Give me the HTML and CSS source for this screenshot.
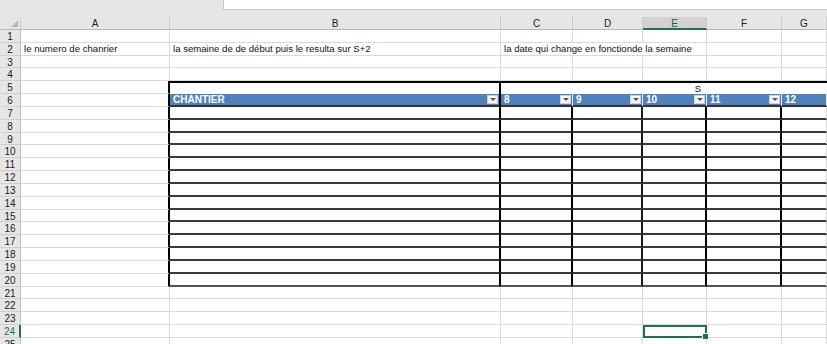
FILE: index.html
```html
<!DOCTYPE html>
<html lang="fr">
<head>
    <meta charset="UTF-8">
    <title>Planning chantiers</title>
    <link rel="stylesheet" href="styles.css">
</head>
<body>
    <!-- Formula bar strip -->
    <div class="topbar">
        <div class="formula"></div>
    </div>

    <div class="sheet">
        <!-- Column headers -->
        <div class="ch corner"></div>
        <div class="ch">A</div>
        <div class="ch">B</div>
        <div class="ch">C</div>
        <div class="ch">D</div>
        <div class="ch active">E</div>
        <div class="ch">F</div>
        <div class="ch">G</div>

        <div class="rh">1</div><div></div><div></div><div></div><div></div><div></div><div></div><div></div>

        <div class="rh">2</div>
        <div>le numero de chanrier</div>
        <div>la semaine de de début puis le resulta sur S+2</div>
        <div class="span3">la date qui change en fonctionde la semaine</div>
        <div></div><div></div>

        <div class="rh">3</div><div></div><div></div><div></div><div></div><div></div><div></div><div></div>
        <div class="rh">4</div><div></div><div></div><div></div><div></div><div></div><div></div><div></div>

        <!-- Table -->
        <div class="rh">5</div>
        <div class="edge"></div>
        <div class="title-b"></div>
        <div class="title-s">S</div>

        <div class="rh">6</div>
        <div class="edge"></div>
        <div class="hd hd-b">CHANTIER<span class="dd"></span></div>
        <div class="hd">8<span class="dd"></span></div>
        <div class="hd">9<span class="dd"></span></div>
        <div class="hd">10<span class="dd"></span></div>
        <div class="hd">11<span class="dd"></span></div>
        <div class="hd">12</div>

        <div class="rh">7</div><div class="edge"></div><div class="tb tb-b"></div><div class="tb tb-k"></div><div class="tb tb-d"></div><div class="tb tb-k"></div><div class="tb tb-k"></div><div class="tb"></div>
        <div class="rh">8</div><div class="edge"></div><div class="tb tb-b"></div><div class="tb tb-k"></div><div class="tb tb-d"></div><div class="tb tb-k"></div><div class="tb tb-k"></div><div class="tb"></div>
        <div class="rh">9</div><div class="edge"></div><div class="tb tb-b"></div><div class="tb tb-k"></div><div class="tb tb-d"></div><div class="tb tb-k"></div><div class="tb tb-k"></div><div class="tb"></div>
        <div class="rh">10</div><div class="edge"></div><div class="tb tb-b"></div><div class="tb tb-k"></div><div class="tb tb-d"></div><div class="tb tb-k"></div><div class="tb tb-k"></div><div class="tb"></div>
        <div class="rh">11</div><div class="edge"></div><div class="tb tb-b"></div><div class="tb tb-k"></div><div class="tb tb-d"></div><div class="tb tb-k"></div><div class="tb tb-k"></div><div class="tb"></div>
        <div class="rh">12</div><div class="edge"></div><div class="tb tb-b"></div><div class="tb tb-k"></div><div class="tb tb-d"></div><div class="tb tb-k"></div><div class="tb tb-k"></div><div class="tb"></div>
        <div class="rh">13</div><div class="edge"></div><div class="tb tb-b"></div><div class="tb tb-k"></div><div class="tb tb-d"></div><div class="tb tb-k"></div><div class="tb tb-k"></div><div class="tb"></div>
        <div class="rh">14</div><div class="edge"></div><div class="tb tb-b"></div><div class="tb tb-k"></div><div class="tb tb-d"></div><div class="tb tb-k"></div><div class="tb tb-k"></div><div class="tb"></div>
        <div class="rh">15</div><div class="edge"></div><div class="tb tb-b"></div><div class="tb tb-k"></div><div class="tb tb-d"></div><div class="tb tb-k"></div><div class="tb tb-k"></div><div class="tb"></div>
        <div class="rh">16</div><div class="edge"></div><div class="tb tb-b"></div><div class="tb tb-k"></div><div class="tb tb-d"></div><div class="tb tb-k"></div><div class="tb tb-k"></div><div class="tb"></div>
        <div class="rh">17</div><div class="edge"></div><div class="tb tb-b"></div><div class="tb tb-k"></div><div class="tb tb-d"></div><div class="tb tb-k"></div><div class="tb tb-k"></div><div class="tb"></div>
        <div class="rh">18</div><div class="edge"></div><div class="tb tb-b"></div><div class="tb tb-k"></div><div class="tb tb-d"></div><div class="tb tb-k"></div><div class="tb tb-k"></div><div class="tb"></div>
        <div class="rh">19</div><div class="edge"></div><div class="tb tb-b"></div><div class="tb tb-k"></div><div class="tb tb-d"></div><div class="tb tb-k"></div><div class="tb tb-k"></div><div class="tb"></div>
        <div class="rh">20</div><div class="edge"></div><div class="tb tb-b last"></div><div class="tb tb-k last"></div><div class="tb tb-d last"></div><div class="tb tb-k last"></div><div class="tb tb-k last"></div><div class="tb last"></div>

        <div class="rh">21</div><div></div><div></div><div></div><div></div><div></div><div></div><div></div>
        <div class="rh">22</div><div></div><div></div><div></div><div></div><div></div><div></div><div></div>
        <div class="rh">23</div><div></div><div></div><div></div><div></div><div></div><div></div><div></div>
        <div class="rh active">24</div><div></div><div></div><div></div><div></div><div class="selected"></div><div></div><div></div>
        <div class="rh">25</div><div></div><div></div><div></div><div></div><div></div><div></div><div></div>
    </div>
</body>
</html>
```

FILE: styles.css
```css
body {
    margin: 0;
    padding: 0;
    background: #fff;
    font-family: "Liberation Sans", Arial, sans-serif;
    font-size: 9.6px;
    color: #111;
    overflow: hidden;
}

.topbar {
    height: 17px;
    background: #e6e6e6;
    display: flex;
    justify-content: flex-end;
}

.formula {
    width: 603px;
    height: 9px;
    background: #fff;
    border-left: 1px solid #c6c6c6;
    border-bottom: 1px solid #c6c6c6;
}

.sheet {
    display: grid;
    grid-template-columns: 21px 149px 331px 72px 70px 64px 75px 45px;
    grid-template-rows: 13px repeat(25, 12.83px);
}

.sheet > div {
    box-sizing: border-box;
    border-right: 1px solid #dadada;
    border-bottom: 1px solid #dadada;
    line-height: 12px;
    padding-left: 3px;
    white-space: nowrap;
    overflow: visible;
}

/* headers */
.sheet > .ch {
    background: #e6e6e6;
    color: #222;
    font-size: 10px;
    text-align: center;
    padding-left: 0;
    border-right: 1px solid #cbcbcb;
    border-bottom: 1px solid #b8b8b8;
    line-height: 13px;
}

.sheet > .ch.active {
    background: #d2d2d2;
    color: #1e5b37;
    border-bottom: 2px solid #217346;
}

.sheet > .corner {
    position: relative;
}

.corner::after {
    content: "";
    position: absolute;
    right: 2px;
    bottom: 2px;
    border-left: 7px solid transparent;
    border-bottom: 7px solid #b9b9b9;
}

.sheet > .rh {
    background: #e6e6e6;
    color: #222;
    font-size: 10px;
    text-align: center;
    padding-left: 0;
    border-right: 1px solid #bdbdbd;
    border-bottom: 1px solid #d0d0d0;
    line-height: 13px;
}

.sheet > .rh.active {
    color: #217346;
    border-right: 2px solid #217346;
}

.sheet > .span3 {
    grid-column: span 3;
}

/* table block */
.sheet > .edge {
    border-right: 2px solid #000;
}

.sheet > .title-b {
    border-top: 2px solid #000;
    border-right: 2px solid #000;
    border-bottom: none;
}

.sheet > .title-s {
    grid-column: span 5;
    border-top: 2px solid #000;
    border-right: none;
    border-bottom: none;
    text-align: center;
    padding-left: 68px;
    line-height: 11px;
}

.sheet > .hd {
    background: #4f81bd;
    color: #fff;
    font-size: 10px;
    font-weight: bold;
    display: flex;
    justify-content: space-between;
    align-items: center;
    border-right: 1px solid #e4e9f0;
    border-bottom: 2px solid #333;
    line-height: 11px;
    padding-right: 1px;
}

.sheet > .hd-b {
    border-right: 2px solid #000;
}

.dd {
    width: 11px;
    height: 9px;
    background: #f7f7f7;
    border: 1px solid #cfcfcf;
    box-sizing: border-box;
    display: flex;
    justify-content: center;
    align-items: center;
}

.dd::after {
    content: "";
    border-left: 3px solid transparent;
    border-right: 3px solid transparent;
    border-top: 3px solid #555;
}

.sheet > .tb {
    border-bottom: 2px solid #3a3a3a;
}

.sheet > .tb-b,
.sheet > .tb-k {
    border-right: 2px solid #000;
}

.sheet > .tb-d {
    border-right: 2px solid #1a1a1a;
}

.sheet > .tb.last {
    border-bottom: 2px solid #555;
}

/* selected cell */
.sheet > .selected {
    position: relative;
    border: 2px solid #217346;
}

.selected::after {
    content: "";
    position: absolute;
    right: -4px;
    bottom: -4px;
    width: 5px;
    height: 5px;
    background: #217346;
    border: 1px solid #fff;
}
```
